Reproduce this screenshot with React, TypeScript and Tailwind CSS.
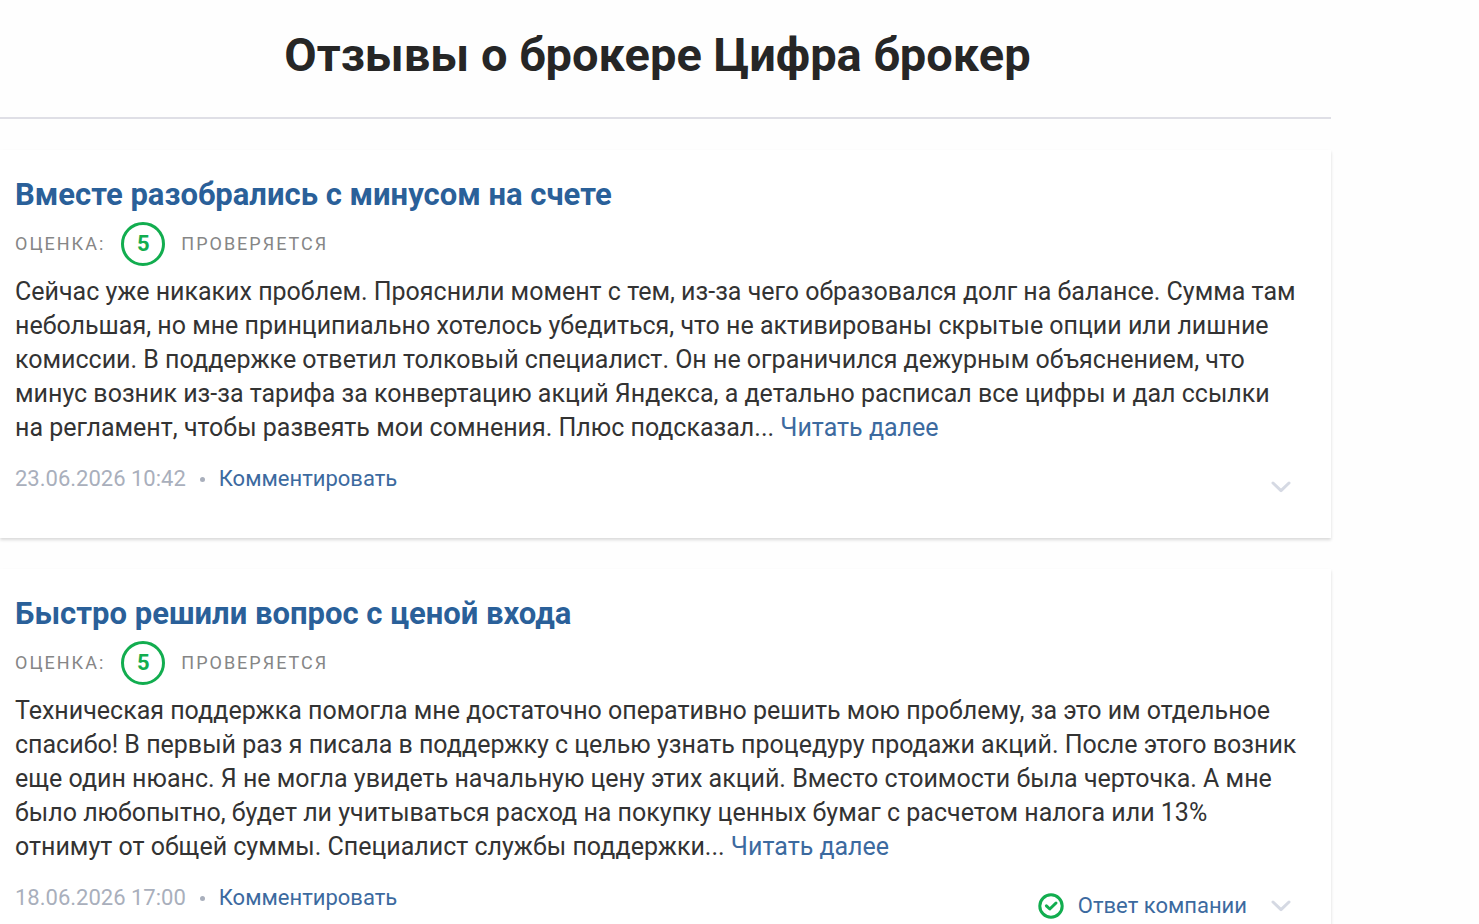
import React from 'react'

interface Review {
  id: number
  title: string
  score: number
  status: string
  text: string
  date: string
  hasCompanyReply: boolean
}

const reviews: Review[] = [
  {
    id: 1,
    title: 'Вместе разобрались с минусом на счете',
    score: 5,
    status: 'Проверяется',
    text: 'Сейчас уже никаких проблем. Прояснили момент с тем, из-за чего образовался долг на балансе. Сумма там небольшая, но мне принципиально хотелось убедиться, что не активированы скрытые опции или лишние комиссии. В поддержке ответил толковый специалист. Он не ограничился дежурным объяснением, что минус возник из-за тарифа за конвертацию акций Яндекса, а детально расписал все цифры и дал ссылки на регламент, чтобы развеять мои сомнения. Плюс подсказал...',
    date: '23.06.2026 10:42',
    hasCompanyReply: false,
  },
  {
    id: 2,
    title: 'Быстро решили вопрос с ценой входа',
    score: 5,
    status: 'Проверяется',
    text: 'Техническая поддержка помогла мне достаточно оперативно решить мою проблему, за это им отдельное спасибо! В первый раз я писала в поддержку с целью узнать процедуру продажи акций. После этого возник еще один нюанс. Я не могла увидеть начальную цену этих акций. Вместо стоимости была черточка. А мне было любопытно, будет ли учитываться расход на покупку ценных бумаг с расчетом налога или 13% отнимут от общей суммы. Специалист службы поддержки...',
    date: '18.06.2026 17:00',
    hasCompanyReply: true,
  },
]

const CheckIcon = () => (
  <svg width="26" height="26" viewBox="0 0 26 26" fill="none" aria-hidden="true">
    <circle cx="13" cy="13" r="11.2" stroke="#12ad4f" strokeWidth="3" />
    <path d="M8.4 12.8L11.8 16L18 10" stroke="#12ad4f" strokeWidth="3" strokeLinecap="round" strokeLinejoin="round" />
  </svg>
)

const ChevronIcon = () => (
  <svg width="20" height="12" viewBox="0 0 20 12" fill="none" aria-hidden="true">
    <path d="M2 2L10 9.6L18 2" stroke="#d5d9e3" strokeWidth="3" strokeLinecap="round" strokeLinejoin="round" />
  </svg>
)

const ReviewCard: React.FC<{ review: Review }> = ({ review }) => (
  <article className="bg-white pt-6 pb-9 pl-[15px] pr-8 shadow-[0_2px_3px_rgba(0,0,0,0.15)]">
    <h2 className="text-[31px] leading-[42px] font-bold">
      <a href="#" className="text-[#2a6099]">{review.title}</a>
    </h2>

    <div className="mt-[6px] flex items-center gap-4 text-[18px] leading-7 uppercase tracking-[2px] text-[#868686]">
      <span>Оценка:</span>
      <span className="flex size-11 items-center justify-center rounded-full border-3 border-[#12ad4f] text-[22px] font-bold tracking-normal text-[#12ad4f]">
        {review.score}
      </span>
      <span>{review.status}</span>
    </div>

    <p className="mt-[9px] text-[25px] leading-[34px] text-[#333]">
      {review.text}{' '}
      <a href="#" className="text-[#3c6a9f]">Читать далее</a>
    </p>

    <div className="mt-[19px] flex items-start justify-between text-[22px] leading-[30px]">
      <div className="flex items-center gap-[14px]">
        <time className="text-[#a9afbc]">{review.date}</time>
        <span className="size-[5px] rounded-full bg-[#a9afbc]" />
        <button className="text-[#3c6a9f]">Комментировать</button>
      </div>
      <div className="flex items-center gap-6 pt-2 pr-2">
        {review.hasCompanyReply && (
          <button className="flex items-center gap-[14px] text-[#3c6a9f]">
            <CheckIcon />
            Ответ компании
          </button>
        )}
        <button aria-label="Развернуть" className="flex h-[30px] items-center">
          <ChevronIcon />
        </button>
      </div>
    </div>
  </article>
)

export default function App() {
  return (
    <div className="h-screen overflow-hidden bg-[#fefefe] font-[Roboto,sans-serif]">
      <main className="mr-37">
        <header className="border-b-2 border-[#dfdfe6] pt-6 pr-4 pb-[31px]">
          <h1 className="text-center text-[47px] leading-[62px] font-bold text-[#262626]">
            Отзывы о брокере Цифра брокер
          </h1>
        </header>

        <div className="flex flex-col gap-[31px] pt-[31px]">
          {reviews.map((review) => (
            <ReviewCard key={review.id} review={review} />
          ))}
        </div>
      </main>
    </div>
  )
}
